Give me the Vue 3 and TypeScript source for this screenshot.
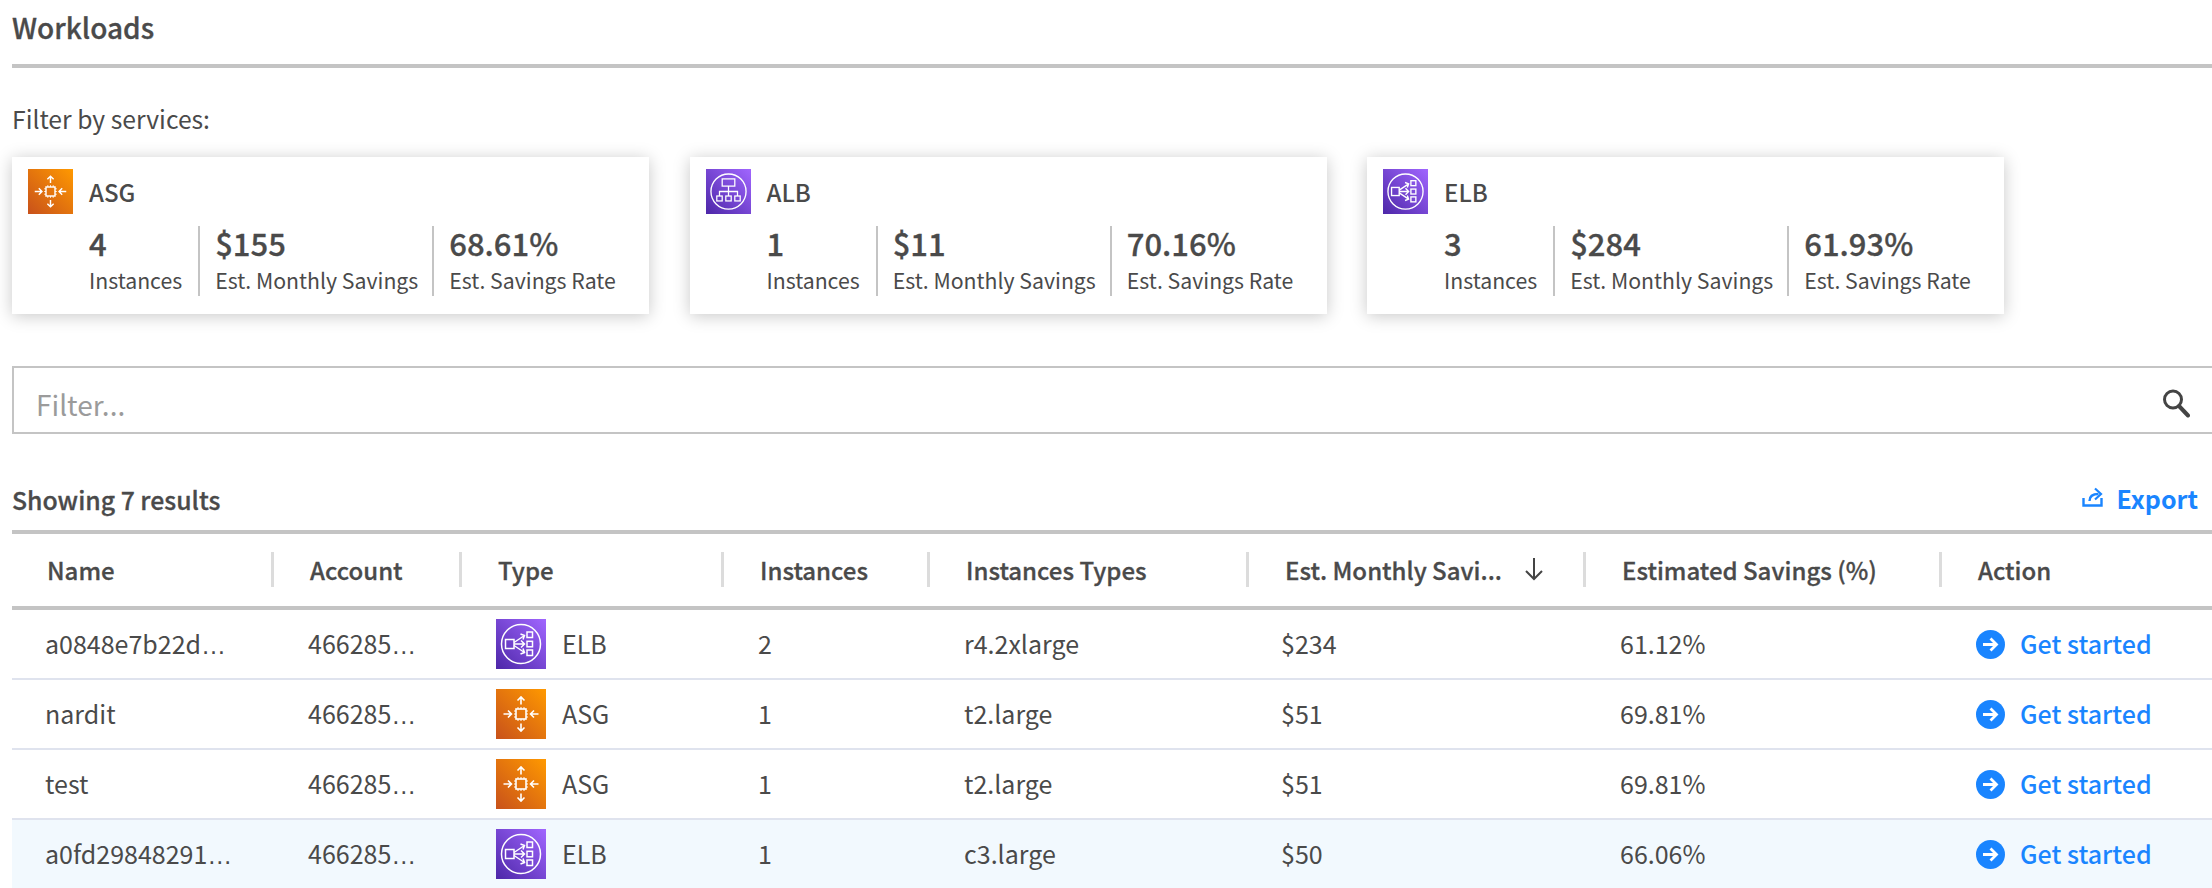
<script setup lang="ts">
type Kind = 'ASG' | 'ALB' | 'ELB'
const cards: { kind: Kind; count: string; savings: string; rate: string }[] = [
  { kind: 'ASG', count: '4', savings: '$155', rate: '68.61%' },
  { kind: 'ALB', count: '1', savings: '$11', rate: '70.16%' },
  { kind: 'ELB', count: '3', savings: '$284', rate: '61.93%' },
]
const columns = ['Name', 'Account', 'Type', 'Instances', 'Instances Types', 'Est. Monthly Savi...', 'Estimated Savings (%)', 'Action']
const rows: { name: string; cut: boolean; kind: Kind; count: string; itype: string; savings: string; rate: string; hover?: boolean }[] = [
  { name: 'a0848e7b22d', cut: true, kind: 'ELB', count: '2', itype: 'r4.2xlarge', savings: '$234', rate: '61.12%' },
  { name: 'nardit', cut: false, kind: 'ASG', count: '1', itype: 't2.large', savings: '$51', rate: '69.81%' },
  { name: 'test', cut: false, kind: 'ASG', count: '1', itype: 't2.large', savings: '$51', rate: '69.81%' },
  { name: 'a0fd29848291', cut: true, kind: 'ELB', count: '1', itype: 'c3.large', savings: '$50', rate: '66.06%', hover: true },
]
</script>

<template>
  <div class="page">
    <svg width="0" height="0" class="defs">
      <defs>
        <linearGradient id="gOrange" x1="0" y1="1" x2="1" y2="0">
          <stop offset="0" stop-color="#c8511b" />
          <stop offset="1" stop-color="#ff9900" />
        </linearGradient>
        <linearGradient id="gPurple" x1="0" y1="1" x2="1" y2="0">
          <stop offset="0" stop-color="#4d27a8" />
          <stop offset="1" stop-color="#a166ff" />
        </linearGradient>
        <symbol id="ASG" viewBox="0 0 50 50">
          <rect width="50" height="50" fill="url(#gOrange)" />
          <g fill="none" stroke="#fff" stroke-width="1.6">
            <rect x="20" y="20" width="10" height="10" />
            <path d="M22 18v2M25 18v2M28 18v2M22 30v2M25 30v2M28 30v2M18 22h2M18 25h2M18 28h2M30 22h2M30 25h2M30 28h2" stroke-width="1" />
            <path d="M25 15.500V8M21.500 11.500l3.500-3.500 3.500 3.500M25 34.500V42M21.500 38.500l3.500 3.500 3.500-3.500M7.500 25h8M12 21.500l3.500 3.500-3.500 3.500M42.500 25h-8M38 21.500l-3.500 3.500 3.500 3.500" />
          </g>
        </symbol>
        <symbol id="ALB" viewBox="0 0 50 50">
          <rect width="50" height="50" fill="url(#gPurple)" />
          <g fill="none" stroke="#fff" stroke-width="1.4">
            <circle cx="25" cy="25" r="19.500" stroke-width="1.500" />
            <rect x="18" y="11" width="14" height="8" />
            <path d="M25 19v6M15 30v-5h20v5M25 25v5" />
            <rect x="12" y="30" width="6" height="5.500" />
            <rect x="22" y="30" width="6" height="5.500" />
            <rect x="32" y="30" width="6" height="5.500" />
          </g>
        </symbol>
        <symbol id="ELB" viewBox="0 0 50 50">
          <rect width="50" height="50" fill="url(#gPurple)" />
          <g fill="none" stroke="#fff" stroke-width="1.500">
            <circle cx="25" cy="25" r="19.500" />
            <rect x="9.500" y="20.500" width="8.500" height="9" />
            <rect x="31" y="13" width="5.500" height="5.500" />
            <rect x="31" y="22.300" width="5.500" height="5.500" />
            <rect x="31" y="31" width="5.500" height="5.500" />
            <path d="M18 23.500l10.500-7M24.500 15l4 1.500-1.500 4M18 25h10.500M25 21.500l3.500 3.500-3.500 3.500M18 26.500l10.500 7M27 29.500l1.500 4-4 1.500" />
          </g>
        </symbol>
      </defs>
    </svg>

    <h1 class="title">Workloads</h1>
    <p class="filter-label">Filter by services:</p>

    <div class="cards">
      <div v-for="c in cards" :key="c.kind" class="card">
        <div class="card-head">
          <svg class="card-icon"><use :href="'#' + c.kind" /></svg>
          <span class="card-name">{{ c.kind }}</span>
        </div>
        <div class="stats">
          <div class="stat">
            <div class="value">{{ c.count }}</div>
            <div class="label">Instances</div>
          </div>
          <div class="stat">
            <div class="value">{{ c.savings }}</div>
            <div class="label">Est. Monthly Savings</div>
          </div>
          <div class="stat">
            <div class="value">{{ c.rate }}</div>
            <div class="label">Est. Savings Rate</div>
          </div>
        </div>
      </div>
    </div>

    <div class="search">
      <span class="placeholder">Filter...</span>
      <svg class="search-icon" viewBox="0 0 28 30" fill="none" stroke="#444">
        <circle cx="11" cy="11.500" r="8.500" stroke-width="3" />
        <path d="M17 18l9 9.500" stroke-width="4" stroke-linecap="round" />
      </svg>
    </div>

    <div class="results">
      <span class="count">Showing 7 results</span>
      <span class="export">
        <svg class="export-icon" viewBox="0 0 22 20" fill="none" stroke="#1a85ff" stroke-width="2.400">
          <path d="M1.500 11v7.500h18V11" />
          <path d="M7.500 14c0-5 3-7 9-7" />
          <path d="M13 1.500l6 5.500-6 5.500" stroke-width="2.200" />
        </svg>
        Export
      </span>
    </div>

    <div class="table">
      <div class="thead grid">
        <div v-for="(col, i) in columns" :key="col" class="th">
          <span>{{ col }}</span>
          <svg v-if="i === 5" class="sort" viewBox="0 0 22 26" fill="none" stroke="#444" stroke-width="2">
            <path d="M11 2v21M3 15l8 8 8-8" />
          </svg>
        </div>
      </div>
      <div v-for="r in rows" :key="r.name" class="tr grid" :class="{ hover: r.hover }">
        <div class="td">
          <span>{{ r.name }}<span v-if="r.cut" class="dots">…</span></span>
        </div>
        <div class="td">
          <span>466285<span class="dots">…</span></span>
        </div>
        <div class="td type">
          <svg class="row-icon"><use :href="'#' + r.kind" /></svg>
          <span>{{ r.kind }}</span>
        </div>
        <div class="td">{{ r.count }}</div>
        <div class="td">{{ r.itype }}</div>
        <div class="td">{{ r.savings }}</div>
        <div class="td">{{ r.rate }}</div>
        <div class="td action">
          <svg class="go" viewBox="0 0 29 29">
            <circle cx="14.500" cy="14.500" r="14.500" fill="#1a85ff" />
            <path d="M7 14.500h13M14.500 8.500l6 6-6 6" fill="none" stroke="#fff" stroke-width="2.800" />
          </svg>
          <span>Get started</span>
        </div>
      </div>
    </div>
  </div>
</template>

<style>
html,
body {
  margin: 0;
  background: #fff;
}
</style>

<style scoped>
.page {
  height: 888px;
  overflow: hidden;
  padding-left: 12px;
  box-sizing: border-box;
  font-family: "Noto Sans CJK SC", "Noto Sans", sans-serif;
  color: #4a4a4a;
}
.defs {
  position: absolute;
}
.title {
  margin: 0;
  height: 64px;
  border-bottom: 4px solid #c4c4c4;
  font-size: 28px;
  line-height: 54px;
  font-weight: 500;
  -webkit-text-stroke: 0.3px #4a4a4a;
}
.filter-label {
  margin: 32px 0 17px;
  font-size: 24.7px;
  line-height: 37px;
  padding-bottom: 3px;
}
.cards {
  display: flex;
  gap: 40.5px;
}
.card {
  width: 637px;
  height: 157px;
  box-sizing: border-box;
  padding: 12px 16px;
  background: #fff;
  box-shadow: 0 2px 16px rgba(0, 0, 0, 0.22);
}
.card-head {
  display: flex;
  align-items: center;
  gap: 16px;
  height: 45px;
}
.card-icon {
  width: 45px;
  height: 45px;
}
.card-name {
  font-size: 24px;
  font-weight: 500;
}
.stats {
  display: flex;
  margin: 12px 0 0 61px;
  height: 70px;
}
.stat {
  padding: 0 14px 0 15px;
  border-right: 2px solid #c4c4c4;
  white-space: nowrap;
}
.stat:first-child {
  padding: 0 16px 0 0;
}
.stat:last-child {
  border-right: none;
}
.value {
  font-size: 31px;
  line-height: 33px;
  font-weight: 500;
  -webkit-text-stroke: 0.3px #4a4a4a;
}
.label {
  margin-top: 4px;
  font-size: 21.25px;
  line-height: 34px;
}
.search {
  display: flex;
  align-items: center;
  justify-content: space-between;
  height: 68px;
  box-sizing: border-box;
  margin-top: 52px;
  padding: 7px 22px 0 22px;
  border: 2px solid #c4c4c4;
  border-right: none;
}
.placeholder {
  font-size: 28px;
  color: #9b9b9b;
}
.search-icon {
  width: 28px;
  height: 30px;
  margin-top: -2px;
}
.results {
  display: flex;
  align-items: center;
  justify-content: space-between;
  height: 42px;
  margin: 44px 14px 10px 0;
}
.count {
  font-size: 24.8px;
  font-weight: 500;
  -webkit-text-stroke: 0.3px #4a4a4a;
}
.export {
  display: flex;
  align-items: center;
  gap: 13px;
  margin-bottom: 3px;
  color: #1a85ff;
  font-size: 25px;
  font-weight: 700;
}
.export-icon {
  width: 22px;
  height: 20px;
  margin-top: -2px;
}
.grid {
  display: grid;
  grid-template-columns: 260px 188px 262px 206px 319px 337px 356px 272px;
}
.thead {
  height: 72px;
  border-top: 4px solid #c4c4c4;
  border-bottom: 4px solid #c4c4c4;
}
.th {
  position: relative;
  display: flex;
  align-items: center;
  padding-left: 38px;
  padding-bottom: 2px;
  font-size: 24px;
  font-weight: 500;
  -webkit-text-stroke: 0.3px #4a4a4a;
}
.th:first-child {
  padding-left: 35px;
}
.th::after {
  content: "";
  position: absolute;
  right: -2px;
  top: 18px;
  width: 3px;
  height: 35px;
  background: #dcdcdc;
}
.th:last-child::after {
  display: none;
}
.sort {
  width: 22px;
  height: 26px;
  margin-left: 21px;
}
.tr {
  height: 68px;
  border-bottom: 2px solid #dfe3ee;
}
.tr.hover {
  background: #f2f9fe;
}
.td {
  display: flex;
  align-items: center;
  padding-left: 36px;
  padding-bottom: 2px;
  font-size: 25px;
}
.td:first-child {
  padding-left: 33px;
}
.td:nth-child(6) {
  padding-left: 34px;
}
.dots {
  font-family: "Liberation Sans", sans-serif;
}
.type {
  gap: 16px;
  padding-bottom: 0;
}
.type span {
  padding-bottom: 2px;
}
.row-icon {
  width: 50px;
  height: 50px;
}
.action {
  gap: 15px;
  color: #1a85ff;
  font-weight: 500;
  padding-bottom: 0;
}
.action span {
  padding-bottom: 2px;
}
.go {
  width: 29px;
  height: 29px;
}
</style>
